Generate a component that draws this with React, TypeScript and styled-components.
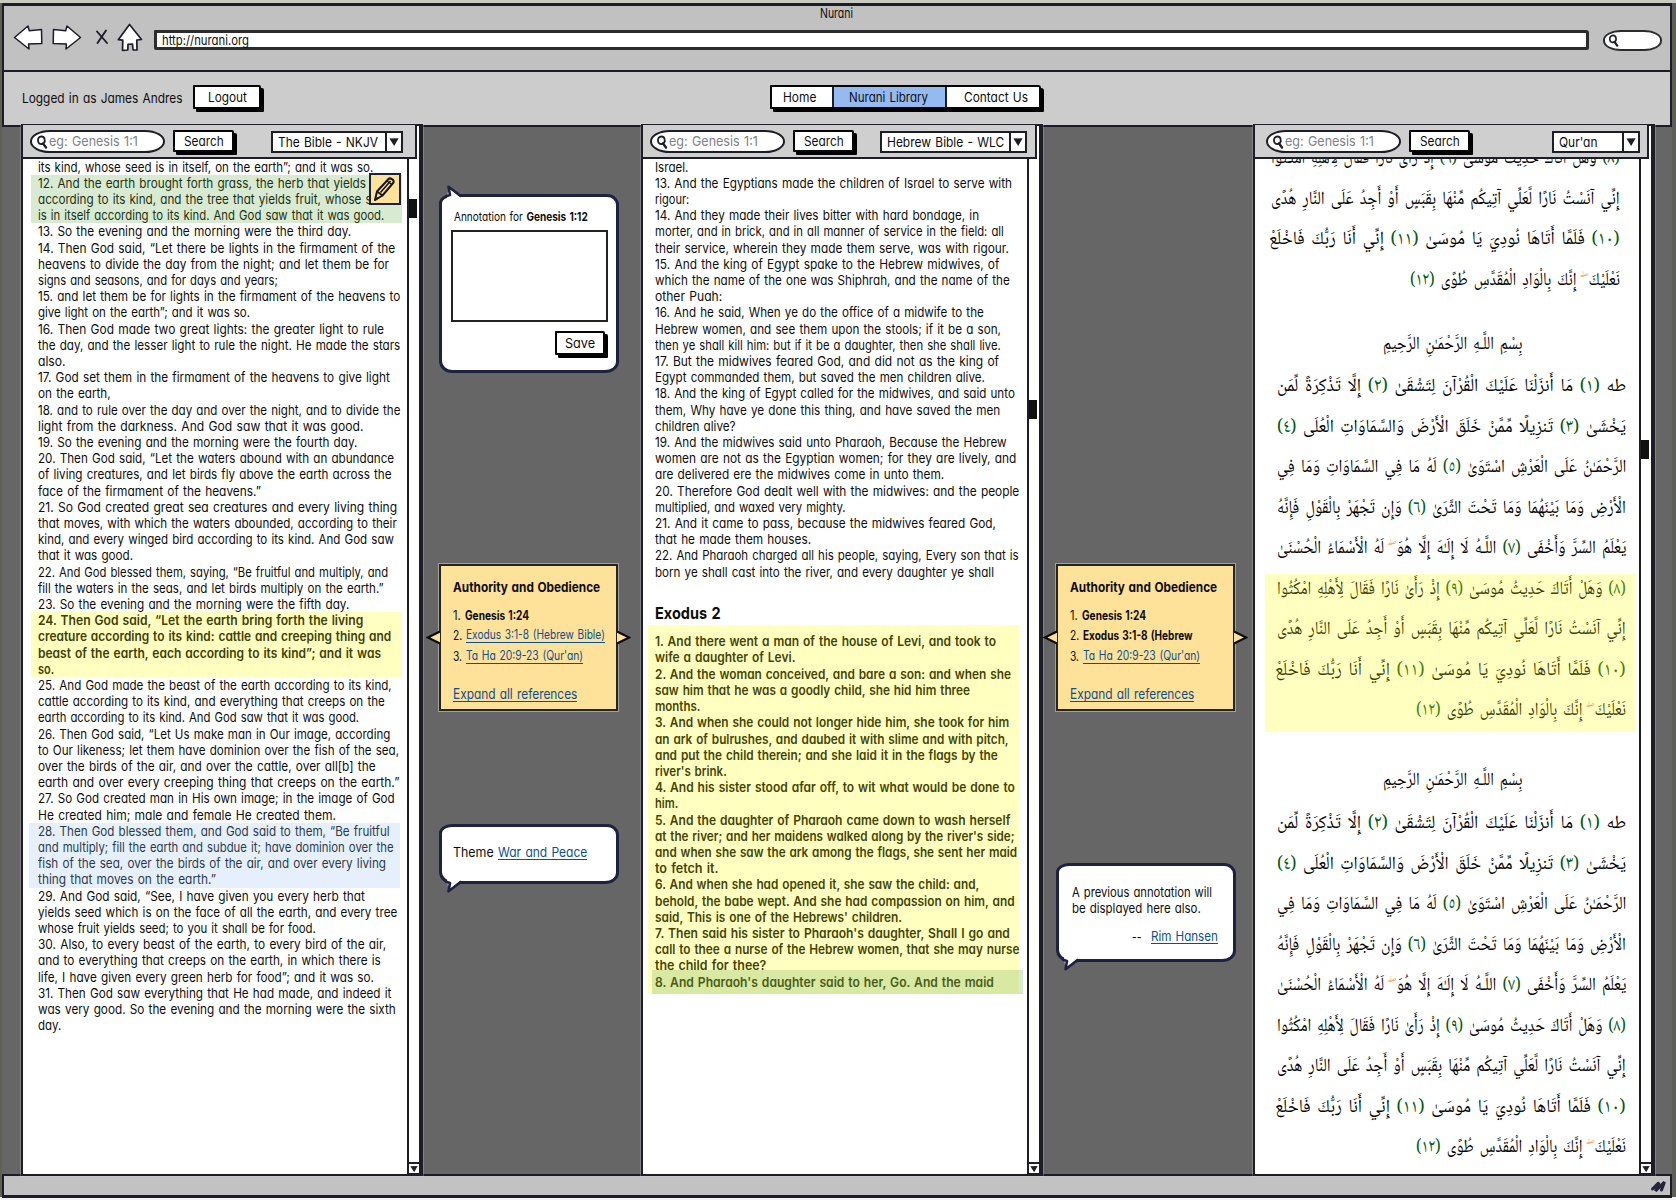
import React, { useLayoutEffect, useRef, useState } from "react";
import styled, { createGlobalStyle, css } from "styled-components";

const INK = "#1c1d26";
const NAVY = "#1e2140";

const Global = createGlobalStyle`
  * { box-sizing: border-box; }
  body {
    margin: 0;
    background: #fff;
    color: #0c0c0c;
    font-family: Inter, "Open Sans", "Liberation Sans", sans-serif;
    font-feature-settings: "cv11";
    font-size: 13px;
    line-height: 16.2px;
    word-spacing: 1px;
  }
`;

/* ---------- text fitted to a measured width ---------- */

const FitBox = styled.span<{ $block?: boolean }>`
  display: ${(p) => (p.$block ? "block" : "inline-block")};
  white-space: nowrap;
  flex: none;
`;
const FitInner = styled.span<{ $rtl?: boolean }>`
  display: inline-block;
  white-space: pre;
  transform-origin: ${(p) => (p.$rtl ? "100% 50%" : "0 50%")};
`;

function Fit({ w, block, rtl, children }: { w: number; block?: boolean; rtl?: boolean; children: React.ReactNode }) {
  const ref = useRef<HTMLSpanElement>(null);
  const [scale, setScale] = useState(1);
  useLayoutEffect(() => {
    if (ref.current) setScale(w / ref.current.offsetWidth);
  }, [w]);
  return (
    <FitBox $block={block} style={{ width: w }}>
      <FitInner ref={ref} $rtl={rtl} style={{ transform: `scaleX(${scale})` }}>
        {children}
      </FitInner>
    </FitBox>
  );
}

/* ---------- browser chrome ---------- */

const Page = styled.div`
  width: 1676px;
  height: 1200px;
  padding: 3px 4px 2px 2px;
  display: flex;
  flex-direction: column;
  background: linear-gradient(#c9cac2 3px, #5f6055 3px, #5f6055 1197px, #f4f4f2 1197px);
  overflow: hidden;
`;
const BrowserBar = styled.header`
  height: 67px;
  flex: none;
  border: 2px solid ${INK};
  border-top-width: 3px;
  border-bottom: 0;
  background: #c1c1c1;
`;
const Title = styled.div`
  height: 15px;
  display: flex;
  justify-content: center;
  padding-right: 2px;
  line-height: 14px;
`;
const AddressRow = styled.div`
  display: flex;
  align-items: center;
  height: 32px;
  padding-left: 9px;
`;
const IconGap = styled.span<{ $w: number }>`
  width: ${(p) => p.$w}px;
  flex: none;
  display: flex;
`;
const Address = styled.div`
  width: 1435px;
  height: 20px;
  margin-top: 6px;
  border: 3px solid #2b2d2d;
  border-radius: 1px 3px 2px 2px;
  background: #fff;
  padding-left: 5px;
  display: flex;
  align-items: center;
`;
const BrowserSearch = styled.div`
  margin: 6px 0 0 14px;
  width: 59px;
  height: 21px;
  border: 2px solid #2b2d2d;
  border-radius: 18px / 10px;
  background: #fff;
  display: flex;
  align-items: center;
  padding-left: 2px;
`;

/* ---------- site header ---------- */

const SiteBar = styled.nav`
  height: 57px;
  flex: none;
  border: 2px solid ${INK};
  background: #ccc;
  display: flex;
  align-items: flex-start;
  padding: 13px 0 0 18px;
`;
const LoggedIn = styled.div`
  width: 171px;
  padding-top: 5px;
  font-size: 13.5px;
`;
const buttonLook = css`
  border: 2px solid #050505;
  background: #fff;
  box-shadow: 3px 3px 0 #000;
  display: flex;
  align-items: center;
  justify-content: center;
`;
const Button = styled.div<{ $w: number; $h: number }>`
  ${buttonLook}
  width: ${(p) => p.$w}px;
  height: ${(p) => p.$h}px;
  flex: none;
  border-radius: 1px 2px 1px 1px;
`;
const Tabs = styled.div`
  ${buttonLook}
  margin-left: 509px;
  width: 271px;
  height: 24px;
  border-radius: 1px 3px 1px 1px;
  justify-content: flex-start;
  align-items: stretch;
`;
const Tab = styled.div<{ $w: number; $active?: boolean; $pad?: number }>`
  width: ${(p) => p.$w}px;
  padding-left: ${(p) => p.$pad ?? 0}px;
  background: ${(p) => (p.$active ? "#94baf1" : "#fff")};
  border-left: ${(p) => (p.$active ? `2px solid ${INK}` : 0)};
  border-right: ${(p) => (p.$active ? `2px solid ${INK}` : 0)};
  display: flex;
  align-items: center;
`;

/* ---------- body ---------- */

const Body = styled.main`
  height: 1047px;
  flex: none;
  display: flex;
  align-items: flex-start;
  background: #666;
  padding-left: 19px;
`;
const Panel = styled.section`
  width: 402px;
  height: 1052px;
  margin-top: -3px;
  flex: none;
  position: relative;
  display: flex;
  flex-direction: column;
  border: 2px solid ${INK};
  border-right-width: 4px;
  outline: 1px solid rgba(225, 225, 235, 0.25);
  background: #fff;
`;
const Toolbar = styled.div<{ $pad: number }>`
  width: 394px;
  height: 34px;
  margin-top: -1px;
  flex: none;
  border-right: 2px solid ${INK};
  border-bottom: 2px solid ${INK};
  background: #cfcfcf;
  display: flex;
  align-items: flex-start;
  padding: 5px 0 0 ${(p) => p.$pad}px;
`;
const SearchField = styled.div`
  width: 135px;
  height: 23px;
  border: 2px solid ${INK};
  border-radius: 20px / 11.5px;
  background: #fff;
  color: #80808a;
  display: flex;
  align-items: center;
  padding-left: 3px;
  margin-right: 8px;
  font-size: 13.5px;
`;
const Select = styled.div<{ $w: number }>`
  width: ${(p) => p.$w}px;
  height: 22px;
  margin: 1px 0 0 auto;
  border: 2px solid ${INK};
  background: #fff;
  display: flex;
  align-items: stretch;
  padding-left: 5px;
  font-size: 13.5px;
`;
const SelectLabel = styled.div`
  flex: 1;
  display: flex;
  align-items: center;
`;
const SelectArrow = styled.div`
  width: 16px;
  border-left: 2px solid ${INK};
  display: flex;
  align-items: center;
  justify-content: center;
`;
const Content = styled.div`
  flex: 1;
  min-height: 0;
  display: flex;
`;
const Text = styled.div<{ $pad: number }>`
  width: 384px;
  flex: none;
  overflow: hidden;
  padding: 0 0 0 ${(p) => p.$pad}px;
`;
const Chapter = styled.div`
  margin-top: -0.5px;
`;
const Track = styled.div`
  width: 12px;
  border-left: 2px solid ${INK};
  display: flex;
  flex-direction: column;
  align-items: stretch;
`;
const Thumb = styled.div<{ $y: number }>`
  width: 8px;
  height: 19px;
  margin: ${(p) => p.$y}px 0 auto 0;
  background: #111;
`;
const Down = styled.div`
  height: 12px;
  border-top: 2px solid ${INK};
  border-bottom: 1px solid ${INK};
  display: flex;
  align-items: center;
  justify-content: center;
`;

type Tone = "plain" | "green" | "yellow" | "blue";
const tones = {
  plain: { bg: "transparent", fg: "#0c0c0c" },
  green: { bg: "#d9ead3", fg: "#1b3012" },
  yellow: { bg: "#ffffc0", fg: "#414005" },
  blue: { bg: "#e6f0fd", fg: "#2b3948" },
};
const Verse = styled.div<{ $tone: Tone; $bold?: boolean; $shift?: number }>`
  width: 371px;
  margin-left: ${(p) => -7 - (p.$shift ?? 0)}px;
  padding-left: ${(p) => 7 + (p.$shift ?? 0)}px;
  background: ${(p) => tones[p.$tone].bg};
  color: ${(p) => tones[p.$tone].fg};
  font-weight: ${(p) => (p.$bold ? 600 : 400)};
`;
const Heading = styled.h2`
  margin: 17.5px 0 0;
  height: 32px;
  font-size: 16.5px;
  line-height: 32px;
  font-weight: 700;
`;
const Passage = styled.div`
  width: 371px;
  margin: -4px 0 0 -7px;
  padding: 8px 0 0 7px;
  background: #ffffc0;
  color: #454405;
  font-weight: 600;
`;
const LastVerse = styled.div`
  width: 371px;
  margin: -4px 0 0 -3px;
  padding: 4px 0 4px 3px;
  background: linear-gradient(to right, #d8e9a4 367px, #d9ead3 367px);
  color: #4b5c17;
`;

/* ---------- margin notes ---------- */

const Gutter = styled.aside<{ $w: number; $pad: number }>`
  width: ${(p) => p.$w}px;
  flex: none;
  padding-left: ${(p) => p.$pad}px;
`;
const Bubble = styled.div<{ $top: number; $h: number; $px: number; $py: number }>`
  position: relative;
  width: 180px;
  height: ${(p) => p.$h}px;
  margin-top: ${(p) => p.$top}px;
  border: 3px solid ${NAVY};
  border-radius: 13px 12px 14px 13px / 9px 11px 11px 12px;
  background: #fff;
  padding: ${(p) => p.$py}px 0 0 ${(p) => p.$px}px;
  font-size: 13.5px;
`;
const Tail = styled.svg<{ $up?: boolean }>`
  position: absolute;
  left: 3px;
  ${(p) => (p.$up ? "top: -12px;" : "bottom: -12px; transform: scaleY(-1);")}
`;
const Caption = styled.div`
  font-size: 12px;
  margin-left: 1px;
`;
const TextArea = styled.div`
  width: 157px;
  height: 92px;
  margin: 5px 0 9px -2px;
  border: 2px solid #23241f;
`;
const Link = styled.a`
  color: #0b4f93;
  border-bottom: 1px solid #0b4f93;
  display: inline-block;
  line-height: 14px;
`;
const SaveRow = styled.div`
  display: flex;
  padding-left: 102px;
`;
const Signature = styled.div`
  display: flex;
  align-items: flex-start;
  gap: 10px;
  padding: 13px 0 0 60px;
`;
const Note = styled.div<{ $top: number }>`
  position: relative;
  width: 179px;
  height: 147px;
  margin-top: ${(p) => p.$top}px;
  border: 2px solid #25251f;
  outline: 1px solid rgba(235, 235, 225, 0.45);
  background: #ffe299;
  padding: 13px 0 0 12px;
  font-size: 12.5px;
`;
const NoteTitle = styled.div`
  font-weight: 700;
  font-size: 13.5px;
  margin-bottom: 13px;
`;
const NoteItem = styled.div`
  height: 20.2px;
  display: flex;
  align-items: flex-start;
  gap: 4px;
  line-height: 15px;
`;
const NoteFoot = styled.div`
  margin-top: 17px;
  font-size: 14px;
`;
const Pointer = styled.svg<{ $side: "left" | "right" }>`
  position: absolute;
  top: 64px;
  ${(p) => (p.$side === "left" ? "left: -15px;" : "right: -15px; transform: scaleX(-1);")}
`;
const PencilBadge = styled.div`
  position: absolute;
  left: 346px;
  top: 47px;
  width: 32px;
  height: 32px;
  border: 2px solid ${NAVY};
  background: #ffe299;
`;

/* ---------- arabic ---------- */

const Arabic = styled.div`
  direction: rtl;
  font-family: "Noto Naskh Arabic", Amiri, "Scheherazade New", "DejaVu Sans", sans-serif;
  font-size: 18.5px;
  line-height: 40.5px;
  word-spacing: 3px;
  color: #000;
`;
const ArabicLine = styled.div`
  height: 40.5px;
`;
const Surah = styled.div<{ $right: number; $pull?: number }>`
  margin-right: ${(p) => p.$right}px;
  margin-top: ${(p) => -(p.$pull ?? 0)}px;
`;
const Basmala = styled.div<{ $top: number; $h: number }>`
  height: ${(p) => p.$h}px;
  margin: ${(p) => p.$top}px 117px 0 0;
`;
const Marked = styled.div`
  display: flow-root;
  width: 371px;
  margin: 4.5px -10px 0 0;
  padding: 0 10px 0 0;
  height: 157.5px;
  background: #ffffc0;
  color: #3f3f05;
`;
const Num = styled.span<{ $soft?: boolean }>`
  color: ${(p) => (p.$soft ? "#3f8505" : "#005a10")};
`;
const Pause = styled.span`
  color: #ff7a2a;
`;

const Footer = styled.footer`
  height: 24px;
  flex: none;
  border: 2px solid ${INK};
  border-bottom-width: 3px;
  background: #c2c2c2;
  display: flex;
  justify-content: flex-end;
  padding: 1px 2px 0 0;
`;

/* ---------- icons ---------- */

const Lens = ({ size = 12 }: { size?: number }) => (
  <svg width={size} height={size} viewBox="0 0 12 14" fill="none" stroke={INK} strokeWidth="1.8" strokeLinecap="round">
    <path d="M5.4 1.5C3 1.5 1.7 3.6 2 6c.3 2.2 2 3.4 3.8 3C8 8.600 9 6.800 8.700 4.700 8.500 2.700 7.300 1.500 5.400 1.500z" />
    <path d="M7 8.500l3 4" strokeWidth="2.400" />
  </svg>
);
const ArrowGlyph = ({ flip }: { flip?: boolean }) => (
  <svg width="30" height="27" viewBox="0 0 30 27" fill="#fff" stroke={INK} strokeWidth="1.5" strokeLinejoin="round">
    <path
      transform={flip ? "translate(30 0) scale(-1 1)" : undefined}
      d="M1.500 13.500L15 2 16.300 6.800 28.500 5.500 28.800 19.500 15.600 20 16 25z"
    />
  </svg>
);
const Triangle = ({ s = 10 }: { s?: number }) => (
  <svg width={s} height={s} viewBox="0 0 10 10">
    <path d="M.4 1.500L9.600 1.200 5.200 9z" fill={INK} />
  </svg>
);
const BubbleTail = ({ up }: { up?: boolean }) => (
  <Tail $up={up} width="20" height="15" viewBox="0 0 20 15">
    <path d="M2 14L3.500 2.500 16.500 13.500 17 15H2z" fill="#fff" />
    <path d="M0 11.500L5 10 3.500 1.800 16.500 11.500" fill="none" stroke={NAVY} strokeWidth="2.600" strokeLinejoin="round" />
  </Tail>
);
const NotePointer = ({ side }: { side: "left" | "right" }) => (
  <Pointer $side={side} width="14" height="15" viewBox="0 0 14 15">
    <path d="M14 1.500L1.800 7.500 14 13.500" fill="#ffe299" stroke="#0a0a0a" strokeWidth="2.200" />
  </Pointer>
);

/* ---------- data ---------- */

type Row = [string, number];
const genesis: { tone: Tone; bold?: boolean; shift?: number; rows: Row[] }[] = [
  { tone: "plain", rows: [["its kind, whose seed is in itself, on the earth”; and it was so.", 335]] },
  {
    tone: "green",
    rows: [
      ["12. And the earth brought forth grass, the herb that yields seed", 359],
      ["according to its kind, and the tree that yields fruit, whose seed", 354],
      ["is in itself according to its kind. And God saw that it was good.", 346],
    ],
  },
  {
    tone: "plain",
    rows: [
      ["13. So the evening and the morning were the third day.", 313],
      ["14. Then God said, “Let there be lights in the firmament of the", 357],
      ["heavens to divide the day from the night; and let them be for", 351],
      ["signs and seasons, and for days and years;", 240],
      ["15. and let them be for lights in the firmament of the heavens to", 362],
      ["give light on the earth”; and it was so.", 212],
      ["16. Then God made two great lights: the greater light to rule", 346],
      ["the day, and the lesser light to rule the night. He made the stars", 362],
      ["also.", 28],
      ["17. God set them in the firmament of the heavens to give light", 352],
      ["on the earth,", 73],
      ["18. and to rule over the day and over the night, and to divide the", 362],
      ["light from the darkness. And God saw that it was good.", 325],
      ["19. So the evening and the morning were the fourth day.", 319],
      ["20. Then God said, “Let the waters abound with an abundance", 356],
      ["of living creatures, and let birds fly above the earth across the", 354],
      ["face of the firmament of the heavens.”", 223],
      ["21. So God created great sea creatures and every living thing", 359],
      ["that moves, with which the waters abounded, according to their", 359],
      ["kind, and every winged bird according to its kind. And God saw", 356],
      ["that it was good.", 95],
      ["22. And God blessed them, saying, “Be fruitful and multiply, and", 350],
      ["fill the waters in the seas, and let birds multiply on the earth.”", 346],
      ["23. So the evening and the morning were the fifth day.", 311],
    ],
  },
  {
    tone: "yellow",
    bold: true,
    rows: [
      ["24. Then God said, “Let the earth bring forth the living", 325],
      ["creature according to its kind: cattle and creeping thing and", 353],
      ["beast of the earth, each according to its kind”; and it was", 343],
      ["so.", 16],
    ],
  },
  {
    tone: "plain",
    rows: [
      ["25. And God made the beast of the earth according to its kind,", 354],
      ["cattle according to its kind, and everything that creeps on the", 347],
      ["earth according to its kind. And God saw that it was good.", 321],
      ["26. Then God said, “Let Us make man in Our image, according", 352],
      ["to Our likeness; let them have dominion over the fish of the sea,", 361],
      ["over the birds of the air, and over the cattle, over all[b] the", 338],
      ["earth and over every creeping thing that creeps on the earth.”", 361],
      ["27. So God created man in His own image; in the image of God", 357],
      ["He created him; male and female He created them.", 298],
    ],
  },
  {
    tone: "blue",
    shift: 2,
    rows: [
      ["28. Then God blessed them, and God said to them, “Be fruitful", 352],
      ["and multiply; fill the earth and subdue it; have dominion over the", 356],
      ["fish of the sea, over the birds of the air, and over every living", 348],
      ["thing that moves on the earth.”", 178],
    ],
  },
  {
    tone: "plain",
    rows: [
      ["29. And God said, “See, I have given you every herb that", 327],
      ["yields seed which is on the face of all the earth, and every tree", 359],
      ["whose fruit yields seed; to you it shall be for food.", 278],
      ["30. Also, to every beast of the earth, to every bird of the air,", 348],
      ["and to everything that creeps on the earth, in which there is", 343],
      ["life, I have given every green herb for food”; and it was so.", 336],
      ["31. Then God saw everything that He had made, and indeed it", 353],
      ["was very good. So the evening and the morning were the sixth", 358],
      ["day.", 23],
    ],
  },
];

const exodus1: Row[] = [
  ["Israel.", 33],
  ["13. And the Egyptians made the children of Israel to serve with", 357],
  ["rigour:", 34],
  ["14. And they made their lives bitter with hard bondage, in", 324],
  ["morter, and in brick, and in all manner of service in the field: all", 349],
  ["their service, wherein they made them serve, was with rigour.", 354],
  ["15. And the king of Egypt spake to the Hebrew midwives, of", 344],
  ["which the name of the one was Shiphrah, and the name of the", 355],
  ["other Puah:", 67],
  ["16. And he said, When ye do the office of a midwife to the", 329],
  ["Hebrew women, and see them upon the stools; if it be a son,", 346],
  ["then ye shall kill him: but if it be a daughter, then she shall live.", 346],
  ["17. But the midwives feared God, and did not as the king of", 344],
  ["Egypt commanded them, but saved the men children alive.", 330],
  ["18. And the king of Egypt called for the midwives, and said unto", 360],
  ["them, Why have ye done this thing, and have saved the men", 345],
  ["children alive?", 81],
  ["19. And the midwives said unto Pharaoh, Because the Hebrew", 352],
  ["women are not as the Egyptian women; for they are lively, and", 361],
  ["are delivered ere the midwives come in unto them.", 289],
  ["20. Therefore God dealt well with the midwives: and the people", 364],
  ["multiplied, and waxed very mighty.", 191],
  ["21. And it came to pass, because the midwives feared God,", 341],
  ["that he made them houses.", 156],
  ["22. And Pharaoh charged all his people, saying, Every son that is", 364],
  ["born ye shall cast into the river, and every daughter ye shall", 339],
];
const exodus2: Row[] = [
  ["1. And there went a man of the house of Levi, and took to", 341],
  ["wife a daughter of Levi.", 140],
  ["2. And the woman conceived, and bare a son: and when she", 356],
  ["saw him that he was a goodly child, she hid him three", 315],
  ["months.", 45],
  ["3. And when she could not longer hide him, she took for him", 354],
  ["an ark of bulrushes, and daubed it with slime and with pitch,", 354],
  ["and put the child therein; and she laid it in the flags by the", 343],
  ["river's brink.", 72],
  ["4. And his sister stood afar off, to wit what would be done to", 360],
  ["him.", 23],
  ["5. And the daughter of Pharaoh came down to wash herself", 355],
  ["at the river; and her maidens walked along by the river's side;", 360],
  ["and when she saw the ark among the flags, she sent her maid", 362],
  ["to fetch it.", 64],
  ["6. And when she had opened it, she saw the child: and,", 324],
  ["behold, the babe wept. And she had compassion on him, and", 360],
  ["said, This is one of the Hebrews' children.", 247],
  ["7. Then said his sister to Pharaoh's daughter, Shall I go and", 355],
  ["call to thee a nurse of the Hebrew women, that she may nurse", 364],
  ["the child for thee?", 111],
];

const taha: Row[] = [
  ["طه (١) مَا أَنزَلْنَا عَلَيْكَ الْقُرْآنَ لِتَشْقَىٰ (٢) إِلَّا تَذْكِرَةً لِّمَن", 349],
  ["يَخْشَىٰ (٣) تَنزِيلًا مِّمَّنْ خَلَقَ الْأَرْضَ وَالسَّمَاوَاتِ الْعُلَى (٤)", 349],
  ["الرَّحْمَـٰنُ عَلَى الْعَرْشِ اسْتَوَىٰ (٥) لَهُ مَا فِي السَّمَاوَاتِ وَمَا فِي", 349],
  ["الْأَرْضِ وَمَا بَيْنَهُمَا وَمَا تَحْتَ الثَّرَىٰ (٦) وَإِن تَجْهَرْ بِالْقَوْلِ فَإِنَّهُ", 349],
  ["يَعْلَمُ السِّرَّ وَأَخْفَى (٧) اللَّـهُ لَا إِلَـٰهَ إِلَّا هُوَ ۖ لَهُ الْأَسْمَاءُ الْحُسْنَىٰ", 349],
];
const musa: Row[] = [
  ["(٨) وَهَلْ أَتَاكَ حَدِيثُ مُوسَىٰ (٩) إِذْ رَأَىٰ نَارًا فَقَالَ لِأَهْلِهِ امْكُثُوا", 349],
  ["إِنِّي آنَسْتُ نَارًا لَّعَلِّي آتِيكُم مِّنْهَا بِقَبَسٍ أَوْ أَجِدُ عَلَى النَّارِ هُدًى", 349],
  ["(١٠) فَلَمَّا أَتَاهَا نُودِيَ يَا مُوسَىٰ (١١) إِنِّي أَنَا رَبُّكَ فَاخْلَعْ", 351],
  ["نَعْلَيْكَ ۖ إِنَّكَ بِالْوَادِ الْمُقَدَّسِ طُوًى (١٢)", 210],
];
const BASMALA = "بِسْمِ اللَّـهِ الرَّحْمَـٰنِ الرَّحِيمِ";

function Ayah({ row, soft }: { row: Row; soft?: boolean }) {
  return (
    <ArabicLine>
      <Fit w={row[1]} block rtl>
        {row[0]
          .split(/(\([٠-٩]+\)| ۖ)/)
          .filter((part) => part !== "")
          .map((part, i) =>
            part.startsWith("(") ? (
              <Num key={i} $soft={soft}>{part}</Num>
            ) : part === " ۖ" ? (
              <Pause key={i}>{part}</Pause>
            ) : (
              part
            )
          )}
      </Fit>
    </ArabicLine>
  );
}

const FirstMarked = styled.div`
  margin-top: -4.5px;
`;

const Lines = ({ rows }: { rows: Row[] }) => (
  <>
    {rows.map(([t, w], i) => (
      <Fit key={i} w={w} block>{t}</Fit>
    ))}
  </>
);

const Ayat = ({ rows, soft }: { rows: Row[]; soft?: boolean }) => (
  <>
    {rows.map((r, i) => (
      <Ayah key={i} row={r} soft={soft} />
    ))}
  </>
);

function Reader(props: {
  source: Row;
  selectW: number;
  selectEnd: number;
  barPad: number;
  textPad: number;
  thumb: number;
  badge?: React.ReactNode;
  children: React.ReactNode;
}) {
  return (
    <Panel>
      <Toolbar $pad={props.barPad}>
        <SearchField>
          <Lens size={14} />
          <Fit w={89}>eg: Genesis 1:1</Fit>
        </SearchField>
        <Button $w={61} $h={22}><Fit w={40}>Search</Fit></Button>
        <Select $w={props.selectW} style={{ marginRight: props.selectEnd }}>
          <SelectLabel><Fit w={props.source[1]}>{props.source[0]}</Fit></SelectLabel>
          <SelectArrow><Triangle /></SelectArrow>
        </Select>
      </Toolbar>
      <Content>
        <Text $pad={props.textPad}><Chapter>{props.children}</Chapter></Text>
        <Track>
          <Thumb $y={props.thumb} />
          <Down><Triangle s={8} /></Down>
        </Track>
      </Content>
      {props.badge}
    </Panel>
  );
}

function References({ top, second }: { top: number; second: React.ReactNode }) {
  return (
    <Note $top={top}>
      <NotePointer side="left" />
      <NotePointer side="right" />
      <NoteTitle><Fit w={147}>Authority and Obedience</Fit></NoteTitle>
      <NoteItem><Fit w={8}>1.</Fit><Fit w={64}><b>Genesis 1:24</b></Fit></NoteItem>
      <NoteItem><Fit w={9}>2.</Fit>{second}</NoteItem>
      <NoteItem><Fit w={9}>3.</Fit><Link><Fit w={117}>Ta Ha 20:9-23 (Qur'an)</Fit></Link></NoteItem>
      <NoteFoot><Link><Fit w={124}>Expand all references</Fit></Link></NoteFoot>
    </Note>
  );
}

export default function App() {
  return (
    <Page>
      <Global />
      <BrowserBar>
        <Title><Fit w={33}>Nurani</Fit></Title>
        <AddressRow>
          <IconGap $w={39}><ArrowGlyph /></IconGap>
          <IconGap $w={43}><ArrowGlyph flip /></IconGap>
          <IconGap $w={22}>
            <svg width="14" height="16" viewBox="0 0 14 16" fill="none" stroke={INK} strokeWidth="1.900" strokeLinecap="round">
              <path d="M2 2.500L12 14M11 1.500L2.500 14" />
            </svg>
          </IconGap>
          <IconGap $w={37}>
            <svg width="26" height="29" viewBox="0 0 26 29" fill="#fff" stroke={INK} strokeWidth="1.700" strokeLinejoin="round">
              <path d="M12.500 1.500L24.500 16.500 19.800 17 20 27 16 26.800 15.500 21 11 21.300 10.800 27 5.500 27.300 5.800 17.200 1.300 16.700z" />
            </svg>
          </IconGap>
          <Address><Fit w={87}>http://nurani.org</Fit></Address>
          <BrowserSearch><Lens size={13} /></BrowserSearch>
        </AddressRow>
      </BrowserBar>

      <SiteBar>
        <LoggedIn><Fit w={160}>Logged in as James Andres</Fit></LoggedIn>
        <Button $w={68} $h={24}><Fit w={39}>Logout</Fit></Button>
        <Tabs>
          <Tab $w={60} $pad={11}><Fit w={33}>Home</Fit></Tab>
          <Tab $w={115} $active $pad={15}><Fit w={79}>Nurani Library</Fit></Tab>
          <Tab $w={92} $pad={17}><Fit w={64}>Contact Us</Fit></Tab>
        </Tabs>
      </SiteBar>

      <Body>
        <Reader
          source={["The Bible - NKJV", 100]}
          selectW={132}
          selectEnd={12}
          barPad={7}
          textPad={15}
          thumb={40}
          badge={
            <PencilBadge>
              <svg width="28" height="28" viewBox="0 0 28 28" fill="none" stroke="#15151c" strokeWidth="2" strokeLinejoin="round">
                <path d="M4 25L6 16.500 17.500 4C19 2.300 23.500 5 22.500 7.500L11.500 20.500z" />
                <path d="M6 16.500L11.500 20.500M9.500 17.500L19.500 6M4 25L7.500 22.500" strokeWidth="1.600" />
                <path d="M16 6L20.800 9.500" strokeWidth="1.500" />
              </svg>
            </PencilBadge>
          }
        >
          {genesis.map((g, i) => (
            <Verse key={i} $tone={g.tone} $bold={g.bold} $shift={g.shift}><Lines rows={g.rows} /></Verse>
          ))}
        </Reader>

        <Gutter $w={218} $pad={16}>
          <Bubble $top={67} $h={179} $px={11} $py={12}>
            <BubbleTail up />
            <Caption><Fit w={134}>Annotation for <b>Genesis 1:12</b></Fit></Caption>
            <TextArea />
            <SaveRow><Button $w={50} $h={24}><Fit w={30}>Save</Fit></Button></SaveRow>
          </Bubble>
          <References top={191} second={<Link><Fit w={139}>Exodus 3:1-8 (Hebrew Bible)</Fit></Link>} />
          <Bubble $top={113} $h={60} $px={11} $py={17}>
            <BubbleTail />
            <Fit w={45}>Theme </Fit><Link><Fit w={89}>War and Peace</Fit></Link>
          </Bubble>
        </Gutter>

        <Reader source={["Hebrew Bible - WLC", 117]} selectW={147} selectEnd={8} barPad={7} textPad={12} thumb={241}>
          <Lines rows={exodus1} />
          <Heading><Fit w={66}>Exodus 2</Fit></Heading>
          <Passage>
            <Lines rows={exodus2} />
            <LastVerse><Fit w={339} block>8. And Pharaoh's daughter said to her, Go. And the maid</Fit></LastVerse>
          </Passage>
        </Reader>

        <Gutter $w={210} $pad={13}>
          <References top={437} second={<Fit w={110}><b>Exodus 3:1-8 (Hebrew</b></Fit>} />
          <Bubble $top={152} $h={99} $px={13} $py={18}>
            <BubbleTail />
            <Fit w={140} block>A previous annotation will</Fit>
            <Fit w={129} block>be displayed here also.</Fit>
            <Signature><Fit w={9}>--</Fit><Link><Fit w={67}>Rim Hansen</Fit></Link></Signature>
          </Bubble>
        </Gutter>

        <Reader source={["Qur'an", 38]} selectW={88} selectEnd={7} barPad={11} textPad={0} thumb={281}>
          <Arabic>
            <Surah $right={19} $pull={20}><Ayat rows={musa} /></Surah>
            <Basmala $top={24} $h={42}><Fit w={139} block rtl>{BASMALA}</Fit></Basmala>
            <Surah $right={13}>
              <Ayat rows={taha} />
              <Marked><FirstMarked><Ayat rows={musa} soft /></FirstMarked></Marked>
            </Surah>
            <Basmala $top={29.5} $h={43}><Fit w={139} block rtl>{BASMALA}</Fit></Basmala>
            <Surah $right={13}>
              <Ayat rows={taha} />
              <Ayat rows={musa} />
            </Surah>
          </Arabic>
        </Reader>
      </Body>

      <Footer>
        <svg width="18" height="18" viewBox="0 0 18 18" fill="none" stroke="#23243a" strokeWidth="3" strokeLinecap="round">
          <path d="M2.500 12L9 5.500 5.500 14 14.500 5 11.500 13" />
        </svg>
      </Footer>
    </Page>
  );
}
